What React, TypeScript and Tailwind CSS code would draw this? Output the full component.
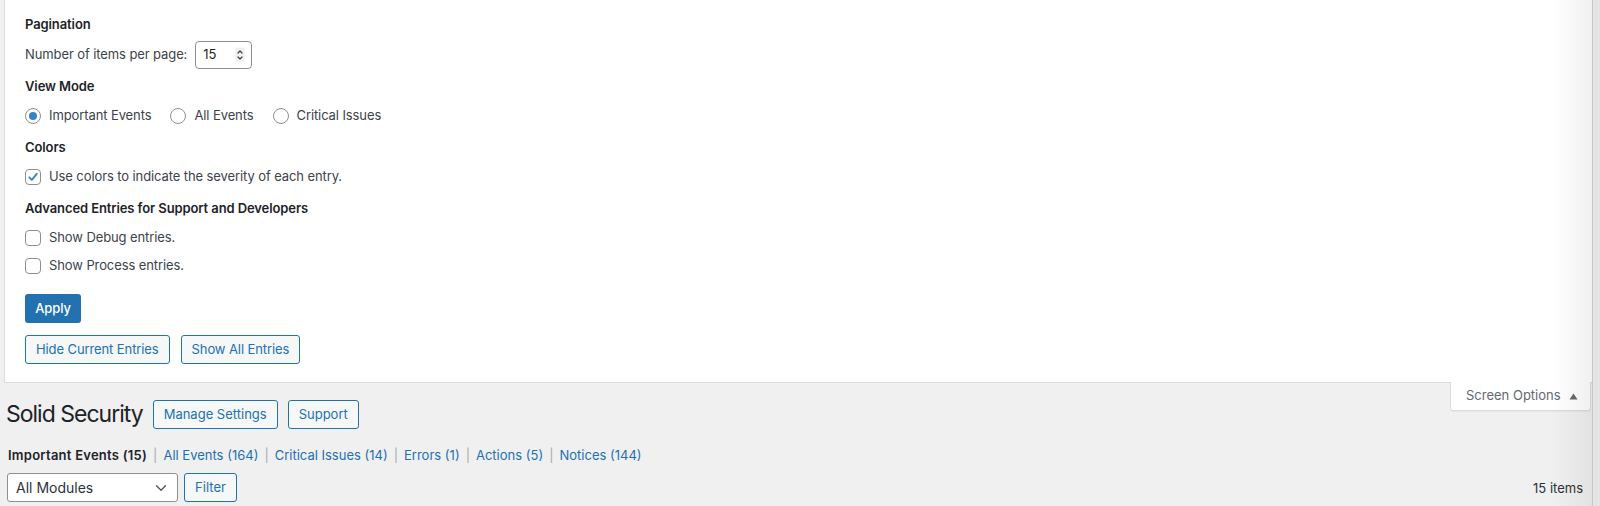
import { useState } from 'react'

const font = { fontFamily: 'Inter, "Liberation Sans", sans-serif' }

function Radio({ checked, label }: { checked?: boolean; label: string }) {
  return (
    <label className="flex items-center gap-[8px]">
      <span className="w-[16px] h-[16px] rounded-full border border-[#8c8f94] bg-white flex items-center justify-center">
        {checked && <span className="w-[8px] h-[8px] rounded-full bg-[#3582c4]" />}
      </span>
      <span>{label}</span>
    </label>
  )
}

function Check({ checked, label }: { checked?: boolean; label: string }) {
  return (
    <label className="flex items-center gap-[8px] h-[20px]">
      <span className="w-[16px] h-[16px] rounded-[4px] border border-[#8c8f94] bg-white flex items-center justify-center">
        {checked && (
          <svg width="12" height="12" viewBox="0 0 12 12" fill="none">
            <path d="M2.3 6.3 L4.8 8.8 L9.8 2.8" stroke="#3582c4" strokeWidth="1.8" strokeLinecap="round" strokeLinejoin="round" />
          </svg>
        )}
      </span>
      <span>{label}</span>
    </label>
  )
}

function SecondaryButton({ children, className = '' }: { children: React.ReactNode; className?: string }) {
  return (
    <button className={`h-[29px] px-[10px] whitespace-nowrap border border-[#2271b1] text-[#2271b1] bg-[#f6f7f7] rounded-[3px] text-[13px] leading-none ${className}`}>
      {children}
    </button>
  )
}

export default function App() {
  const [view] = useState('important')
  const links = [
    ['All Events', 164],
    ['Critical Issues', 14],
    ['Errors', 1],
    ['Actions', 5],
    ['Notices', 144],
  ] as const

  return (
    <div className="flex h-[506px] w-[1600px] bg-[#f0f0f1] overflow-hidden text-[13px] text-[#3c434a]" style={font}>
      <div className="relative flex-1 min-w-0">
        {/* Screen options panel */}
        <div className="ml-[4px] h-[383px] bg-white border-l border-b border-[#dcdcde] pl-[20px] pt-[14px] tracking-[-0.1px]">
          <div className="h-[20px] leading-[20px] font-semibold text-[#1d2327]">Pagination</div>
          <div className="mt-[7px] flex items-center gap-[8px] h-[28px]">
            <span>Number of items per page:</span>
            <div className="w-[57px] h-[28px] border border-[#8c8f94] rounded-[4px] bg-white flex items-center pl-[7px] pr-[6px]">
              <span className="flex-1 text-[#1d2327]">15</span>
              <svg width="10" height="16" viewBox="0 0 10 16" fill="none">
                <rect x="0.5" y="0.5" width="9" height="15" rx="3" fill="#f0f0f1" />
                <path d="M3 6 L5 4 L7 6" stroke="#3c434a" strokeWidth="1.2" strokeLinecap="round" strokeLinejoin="round" />
                <path d="M3 10 L5 12 L7 10" stroke="#3c434a" strokeWidth="1.2" strokeLinecap="round" strokeLinejoin="round" />
              </svg>
            </div>
          </div>

          <div className="mt-[7px] h-[20px] leading-[20px] font-semibold text-[#1d2327]">View Mode</div>
          <div className="mt-[10px] h-[20px] flex items-center gap-[19px]">
            <Radio checked={view === 'important'} label="Important Events" />
            <Radio label="All Events" />
            <Radio label="Critical Issues" />
          </div>

          <div className="mt-[11px] h-[20px] leading-[20px] font-semibold text-[#1d2327]">Colors</div>
          <div className="mt-[10px]">
            <Check checked label="Use colors to indicate the severity of each entry." />
          </div>

          <div className="mt-[11px] h-[20px] leading-[20px] font-semibold text-[#1d2327]">Advanced Entries for Support and Developers</div>
          <div className="mt-[10px]">
            <Check label="Show Debug entries." />
          </div>
          <div className="mt-[8px]">
            <Check label="Show Process entries." />
          </div>

          <button className="mt-[18px] h-[29px] w-[56px] rounded-[3px] bg-[#2271b1] text-white text-[13px] font-medium leading-none">Apply</button>

          <div className="mt-[12px] flex gap-[11px]">
            <SecondaryButton>Hide Current Entries</SecondaryButton>
            <SecondaryButton>Show All Entries</SecondaryButton>
          </div>
        </div>

        {/* Screen Options tab */}
        <div className="absolute right-[1px] top-[382px] h-[29px] w-[141px] bg-white border-x border-b border-[#dcdcde] rounded-b-[3px] flex items-center pl-[15px] gap-[8px] text-[#646970] shadow-[0_1px_1px_rgba(0,0,0,0.04)]">
          <span>Screen Options</span>
          <svg width="9" height="7" viewBox="0 0 9 7">
            <path d="M4.5 0.5 L8.5 6.5 L0.5 6.5 Z" fill="#646970" />
          </svg>
        </div>

        {/* Page header */}
        <div className="pl-[6px] pr-[9px]">
          <div className="mt-[17px] flex items-center h-[29px]">
            <h1 className="text-[23px] font-normal text-[#1d2327] leading-none tracking-[-1px]">Solid Security</h1>
            <SecondaryButton className="ml-[10px]">Manage Settings</SecondaryButton>
            <SecondaryButton className="ml-[10px]">Support</SecondaryButton>
          </div>

          <ul className="mt-[16px] flex items-center h-[20px] leading-[20px]">
            <li className="font-semibold text-[#1d2327] pl-[2px] tracking-[0.25px]">Important Events (15)</li>
            {links.map(([name, n]) => (
              <li key={name} className="flex items-center">
                <span className="text-[#a7aaad] px-[6px]">|</span>
                <a className="text-[#2271b1]">{name} ({n})</a>
              </li>
            ))}
          </ul>

          <div className="mt-[8px] flex items-center pl-[1px]">
            <div className="w-[171px] h-[29px] border border-[#8c8f94] rounded-[3px] bg-white flex items-center pl-[8px] pr-[10px] text-[#2c3338]">
              <span className="flex-1 text-[14px]">All Modules</span>
              <svg width="12" height="8" viewBox="0 0 12 8" fill="none">
                <path d="M1.5 1.8 L6 6.2 L10.5 1.8" stroke="#50575e" strokeWidth="1.4" strokeLinecap="round" strokeLinejoin="round" />
              </svg>
            </div>
            <SecondaryButton className="ml-[6px] w-[53px] px-0">Filter</SecondaryButton>
            <span className="ml-auto text-[#2c3338] mt-[2px]">15 items</span>
          </div>
        </div>

        {/* right fade */}
        <div className="absolute inset-y-0 right-0 w-[40px] bg-gradient-to-r from-transparent to-[rgba(0,0,0,0.06)] pointer-events-none" />
      </div>
      <div className="w-[8px] bg-[#e4e4e4] border-l border-[#c8c8c8]" />
    </div>
  )
}
